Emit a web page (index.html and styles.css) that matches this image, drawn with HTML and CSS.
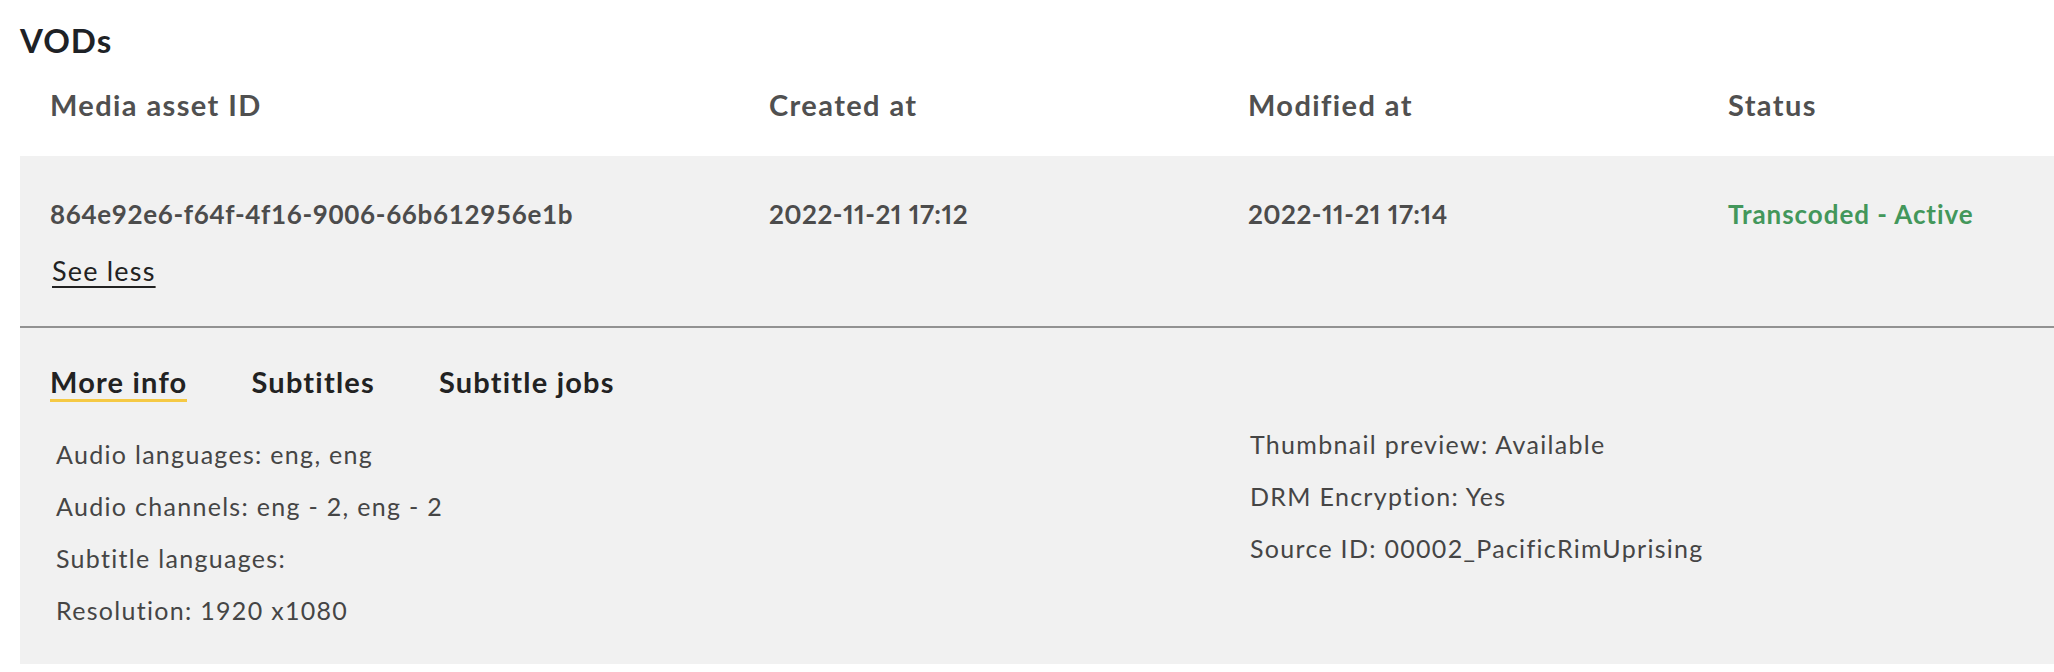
FILE: index.html
```html
<!DOCTYPE html>
<html>
<head>
<meta charset="utf-8">
<link rel="stylesheet" href="styles.css">
</head>
<body>
<h1 class="title">VODs</h1>
<div class="table">
  <div class="thead">
    <div class="th">Media asset ID</div>
    <div class="th">Created at</div>
    <div class="th">Modified at</div>
    <div class="th">Status</div>
  </div>
  <div class="row">
    <div class="row-main">
      <div class="cell">
        <div class="td">864e92e6-f64f-4f16-9006-66b612956e1b</div>
        <a class="see-less" href="#">See less</a>
      </div>
      <div class="cell"><div class="td date">2022-11-21 17:12</div></div>
      <div class="cell"><div class="td date">2022-11-21 17:14</div></div>
      <div class="cell"><div class="td status">Transcoded - Active</div></div>
    </div>
    <div class="details">
      <div class="tabs">
        <span class="tab active">More info</span>
        <span class="tab">Subtitles</span>
        <span class="tab">Subtitle jobs</span>
      </div>
      <div class="info">
        <div class="info-left">
          <p>Audio languages: eng, eng</p>
          <p>Audio channels: eng - 2, eng - 2</p>
          <p>Subtitle languages:</p>
          <p>Resolution: 1920 x1080</p>
        </div>
        <div class="info-right">
          <p>Thumbnail preview: Available</p>
          <p>DRM Encryption: Yes</p>
          <p>Source ID: 00002_PacificRimUprising</p>
        </div>
      </div>
    </div>
  </div>
</div>
</body>
</html>
```
FILE: styles.css
```css
html, body {
  margin: 0;
  padding: 0;
  background: #ffffff;
  overflow: hidden;
}
body {
  font-family: "Lato", "Open Sans", sans-serif;
  color: #444;
  width: 2054px;
}
.title {
  margin: 0;
  padding: 20px 0 0 20px;
  font-size: 33px;
  line-height: 40px;
  font-weight: 700;
  letter-spacing: 1px;
  color: #1e2226;
}
.table {
  margin-left: 20px;
  width: 2200px;
}
.thead {
  display: grid;
  grid-template-columns: 719px 479px 480px 1fr;
  height: 96px;
  align-items: center;
}
.th {
  padding-left: 30px;
  padding-bottom: 7px;
  font-size: 29px;
  font-weight: 700;
  letter-spacing: 1.4px;
  color: #505050;
}
.row {
  background: #f1f1f1;
  height: 508px;
}
.row-main {
  display: grid;
  grid-template-columns: 719px 479px 480px 1fr;
  border-bottom: 2px solid #929292;
  height: 172px;
  box-sizing: border-box;
  padding-top: 42px;
}
.cell {
  padding-left: 30px;
}
.td {
  font-size: 26px;
  line-height: 32px;
  font-weight: 700;
  letter-spacing: 0.65px;
  color: #4c4c4c;
}
.date {
  font-variant-numeric: proportional-nums;
  letter-spacing: 0.45px;
}
.status {
  color: #43975b;
  letter-spacing: 0.95px;
}
.see-less {
  display: inline-block;
  margin-top: 26px;
  margin-left: 2px;
  font-size: 27px;
  line-height: 30px;
  letter-spacing: 1.2px;
  color: #222;
  text-decoration: underline;
  text-underline-offset: 5px;
  text-decoration-thickness: 2px;
}
.details {
  padding: 38px 0 0 30px;
}
.tabs {
  display: flex;
  gap: 64px;
  height: 36px;
}
.tab {
  font-size: 29px;
  line-height: 32px;
  font-weight: 700;
  letter-spacing: 1.2px;
  color: #222;
}
.tab.active {
  border-bottom: 3px solid #f5c944;
}
.info {
  display: grid;
  grid-template-columns: 1168px 1fr;
}
.info p {
  margin: 0;
  font-size: 25px;
  line-height: 52px;
  letter-spacing: 1.3px;
  color: #454545;
}
.info-left {
  padding: 26px 0 0 6px;
}
.info-right {
  padding: 16px 0 0 32px;
}
```
